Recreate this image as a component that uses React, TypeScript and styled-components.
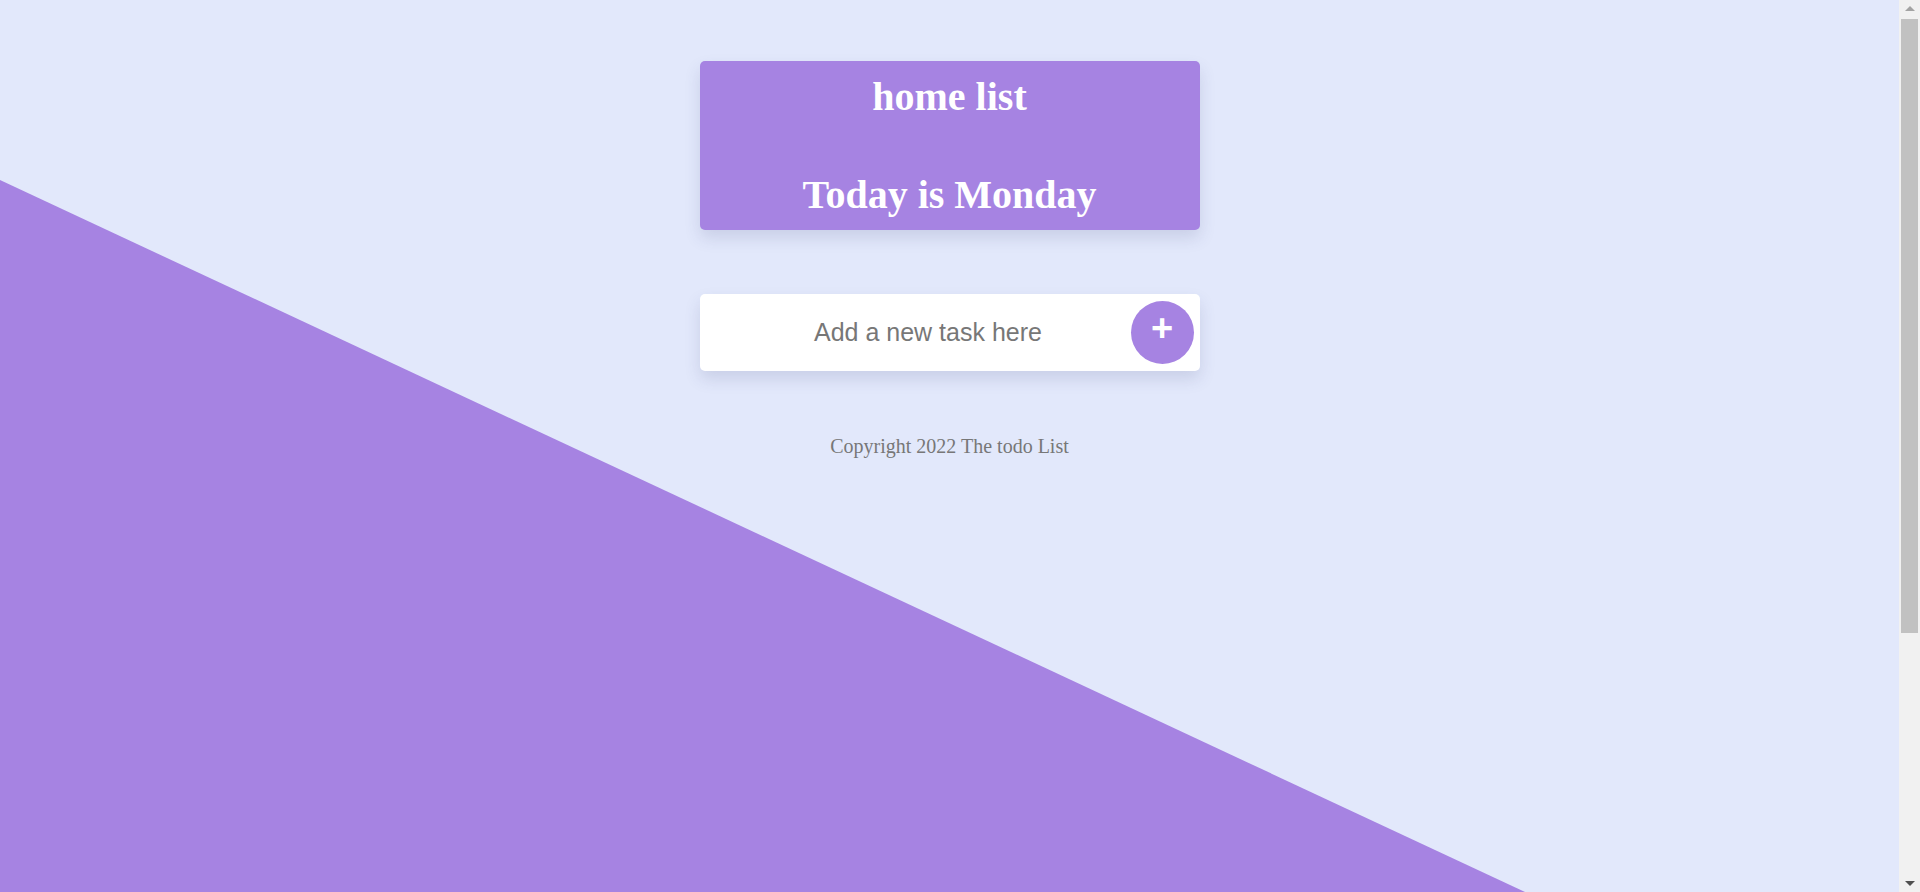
import styled, { createGlobalStyle } from "styled-components";

const GlobalStyle = createGlobalStyle`
  html, body {
    margin: 0;
    height: 100%;
    overflow: hidden;
  }
  body {
    background: #e2e8fb;
    font-family: "Liberation Serif", "Times New Roman", serif;
  }
`;

const Shell = styled.div`
  height: 100vh;
  display: flex;
`;

const Viewport = styled.div`
  flex: 1;
  min-width: 0;
  overflow: hidden;
`;

const Page = styled.div`
  position: relative;
  min-height: 1246px;
  display: flex;
  flex-direction: column;
  align-items: center;
  padding-top: 61px;
  box-sizing: border-box;
  &::before {
    content: "";
    position: absolute;
    inset: 0;
    background: #a683e2;
    clip-path: polygon(0 14.45%, 100% 85.6%, 100% 100%, 0 100%);
    z-index: 0;
  }
`;

const Column = styled.main`
  position: relative;
  z-index: 1;
  width: 500px;
  display: flex;
  flex-direction: column;
  gap: 64px;
`;

const Header = styled.header`
  background: #a683e2;
  border-radius: 5px;
  box-shadow: 0 8px 16px rgba(60, 70, 120, 0.15);
  padding: 14px 0 13px;
  display: flex;
  flex-direction: column;
  align-items: center;
  gap: 54px;
`;

const Title = styled.h1`
  margin: 0;
  color: #fff;
  font-size: 40px;
  font-weight: bold;
  line-height: 44px;
`;

const TaskForm = styled.form`
  height: 77px;
  background: #fff;
  border-radius: 5px;
  box-shadow: 0 8px 16px rgba(60, 70, 120, 0.15);
  display: flex;
  align-items: center;
  padding: 6px;
  box-sizing: border-box;
`;

const TaskInput = styled.input`
  flex: 1;
  min-width: 0;
  height: 100%;
  border: none;
  outline: none;
  background: transparent;
  padding: 0 0 0 20px;
  text-align: center;
  font-family: "Liberation Sans", Arial, sans-serif;
  font-size: 25px;
  color: #444;
  &::placeholder {
    color: #777;
  }
`;

const AddButton = styled.button`
  width: 63px;
  height: 63px;
  flex-shrink: 0;
  border: none;
  border-radius: 50%;
  background: #a683e2;
  color: #fff;
  font-family: "Liberation Sans", Arial, sans-serif;
  font-size: 38px;
  font-weight: bold;
  line-height: 1;
  padding: 0 0 10px;
  display: flex;
  align-items: center;
  justify-content: center;
  cursor: pointer;
`;

const Footer = styled.footer`
  text-align: center;
  color: #777;
  font-size: 20px;
  line-height: 23px;
`;

const Scrollbar = styled.div`
  width: 21px;
  flex-shrink: 0;
  background: #f1f1f1;
  display: flex;
  flex-direction: column;
  align-items: center;
`;

const Arrow = styled.div<{ $down?: boolean }>`
  height: 17px;
  width: 100%;
  display: flex;
  align-items: center;
  justify-content: center;
  &::after {
    content: "";
    border-left: 5px solid transparent;
    border-right: 5px solid transparent;
    ${(p) =>
      p.$down
        ? "border-top: 5px solid #505050;"
        : "border-bottom: 5px solid #a3a3a3;"}
  }
`;

const Thumb = styled.div`
  width: 17px;
  height: 614px;
  margin-top: 2px;
  background: #c1c1c1;
`;

const Track = styled.div`
  flex: 1;
  width: 100%;
  display: flex;
  justify-content: center;
`;

export default function App() {
  return (
    <>
      <GlobalStyle />
      <Shell>
        <Viewport>
          <Page>
            <Column>
              <Header>
                <Title>home list</Title>
                <Title>Today is Monday</Title>
              </Header>
              <TaskForm onSubmit={(e) => e.preventDefault()}>
                <TaskInput type="text" placeholder="Add a new task here" />
                <AddButton type="submit">+</AddButton>
              </TaskForm>
              <Footer>Copyright 2022 The todo List</Footer>
            </Column>
          </Page>
        </Viewport>
        <Scrollbar>
          <Arrow />
          <Track>
            <Thumb />
          </Track>
          <Arrow $down />
        </Scrollbar>
      </Shell>
    </>
  );
}
